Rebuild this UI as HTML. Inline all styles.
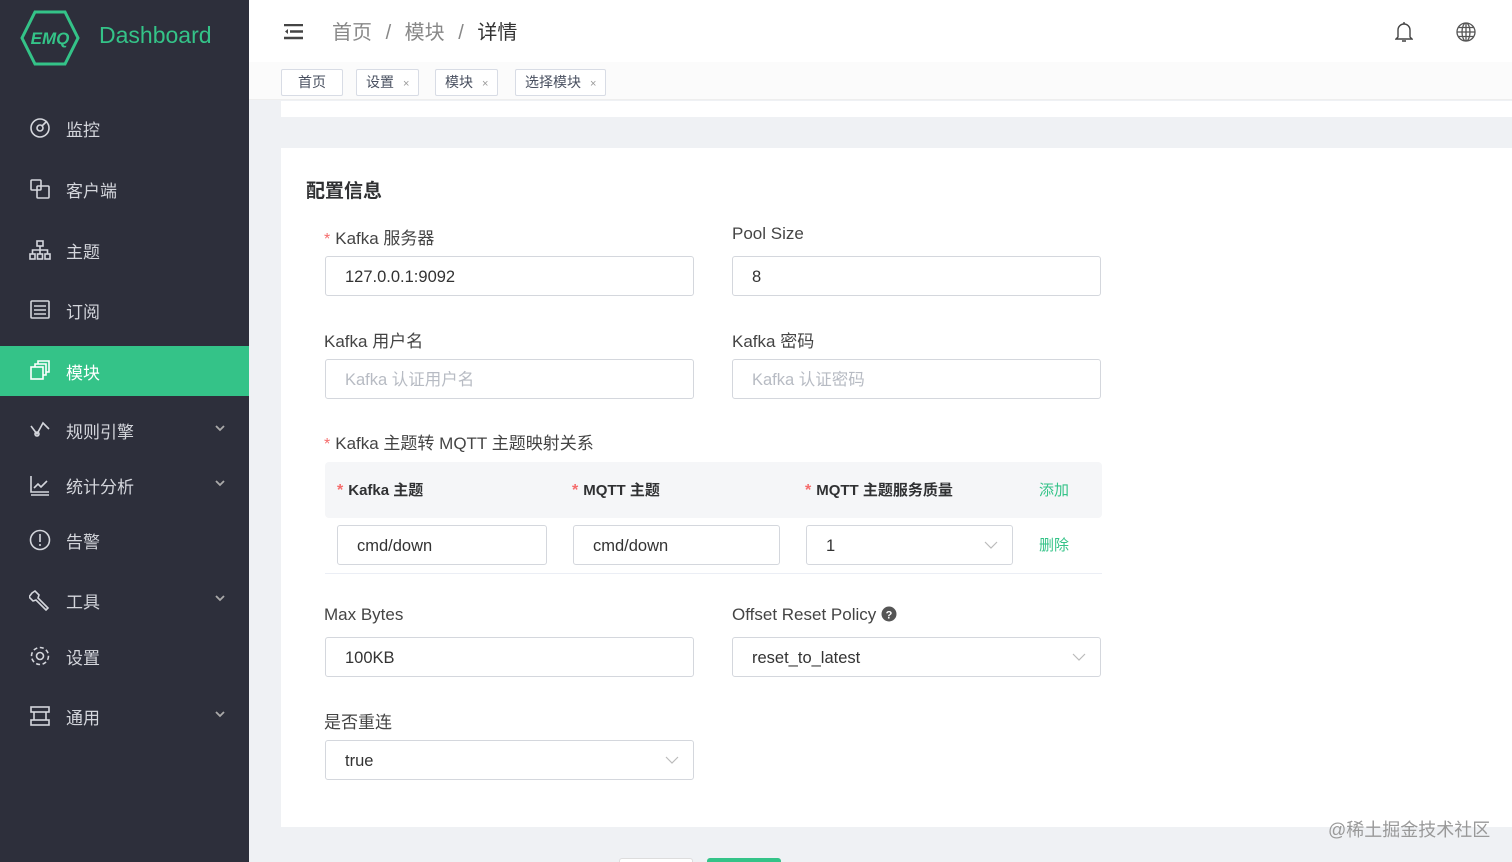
<!DOCTYPE html>
<html><head><meta charset="utf-8"><style>
*{box-sizing:border-box;margin:0;padding:0}
html,body{width:1512px;height:862px;overflow:hidden}
body{background:#eff1f4;font-family:"Liberation Sans","Noto Sans CJK SC",sans-serif;position:relative;color:#303133}
.side{position:absolute;left:0;top:0;width:249px;height:862px;background:#2d2f3b}
.logo{position:absolute;left:20px;top:10px}
.brand{position:absolute;left:99px;top:22px;font-size:23px;color:#34c388}
.mi{position:absolute;left:0;width:249px;height:50px;color:#d4d6dc;font-size:17px}
.mi .t{position:absolute;left:66px;top:13px}
.mi svg.ic{position:absolute;left:29px;top:14px}
.mi .ar{position:absolute;left:214px;top:18px}
.act{background:#34c388;color:#fff}
.hdr{position:absolute;left:249px;top:0;right:0;height:62px;background:#fff}
.tags{position:absolute;left:249px;top:62px;right:0;height:38px;background:#fbfbfb;border-bottom:1px solid #eee}
.tag{position:absolute;top:69px;height:27px;border:1px solid #d8dce5;background:#fff;font-size:14px;line-height:25px;padding:0 9px;color:#495060;border-radius:2px}
.tag i{font-style:normal;font-size:11px;color:#999;margin-left:9px}
.card{position:absolute;left:281px;top:148px;width:1231px;height:679px;background:#fff}
.lbl{position:absolute;font-size:17px;color:#444}
.req{color:#f56c6c;font-size:16px;margin-right:5px}
.inp{position:absolute;height:40px;border:1px solid #d4d7dd;border-radius:3px;font-size:16.5px;color:#333;padding-left:19px;line-height:40px;background:#fff}
.ph{color:#b7bbc3}
.chev{position:absolute;right:14px;top:14px}
.g{color:#34c388;font-size:15px;position:absolute}
</style></head><body>
<div class="side">
<svg class="logo" width="60" height="56" viewBox="0 0 60 56"><polygon points="15,2 45,2 58,28 45,54 15,54 2,28" fill="none" stroke="#34c388" stroke-width="3"/><text x="30" y="34" font-size="17" font-style="italic" font-weight="bold" fill="#34c388" text-anchor="middle" font-family="Liberation Sans">EMQ</text></svg>
<div class="brand">Dashboard</div>
<div class="mi" style="top:103px"><svg class="ic" width="22" height="22" viewBox="0 0 22 22" fill="none" stroke="#d4d6dc" stroke-width="1.6"><circle cx="11" cy="11" r="9"/><circle cx="11" cy="11" r="3"/><path d="M13 9l5-5"/></svg><span class="t">监控</span></div>
<div class="mi" style="top:164px"><svg class="ic" width="22" height="22" viewBox="0 0 22 22" fill="none" stroke="#d4d6dc" stroke-width="1.6"><rect x="2" y="2" width="10" height="10" rx="1"/><rect x="8" y="8" width="12" height="12" rx="1"/></svg><span class="t">客户端</span></div>
<div class="mi" style="top:225px"><svg class="ic" width="22" height="22" viewBox="0 0 22 22" fill="none" stroke="#d4d6dc" stroke-width="1.6"><rect x="8" y="2" width="6" height="5"/><rect x="1" y="15" width="5" height="5"/><rect x="8.5" y="15" width="5" height="5"/><rect x="16" y="15" width="5" height="5"/><path d="M11 7v8M3.5 15v-4h15v4"/></svg><span class="t">主题</span></div>
<div class="mi" style="top:285px"><svg class="ic" width="22" height="22" viewBox="0 0 22 22" fill="none" stroke="#d4d6dc" stroke-width="1.6"><rect x="2" y="2" width="18" height="17" rx="1"/><path d="M5 7h12M5 11h12M5 15h12"/></svg><span class="t">订阅</span></div>
<div class="mi act" style="top:346px"><svg class="ic" width="22" height="22" viewBox="0 0 22 22" fill="none" stroke="#fff" stroke-width="1.6"><rect x="2" y="7" width="12" height="12"/><path d="M6 7V4h11v11h-3M9 4V1h11v11h-3"/></svg><span class="t">模块</span></div>
<div class="mi" style="top:405px"><svg class="ic" width="22" height="22" viewBox="0 0 22 22" fill="none" stroke="#d4d6dc" stroke-width="1.6"><path d="M2 7l6 8 6-11 6 6"/><circle cx="8" cy="15" r="2"/></svg><span class="t">规则引擎</span><svg class="ar" width="12" height="10"><path d="M2 3l4 4 4-4" fill="none" stroke="#aaa" stroke-width="1.8"/></svg></div>
<div class="mi" style="top:460px"><svg class="ic" width="22" height="22" viewBox="0 0 22 22" fill="none" stroke="#d4d6dc" stroke-width="1.6"><path d="M2 2v16h18M2 21h18M5 14l4-4 3 3 6-6"/></svg><span class="t">统计分析</span><svg class="ar" width="12" height="10"><path d="M2 3l4 4 4-4" fill="none" stroke="#aaa" stroke-width="1.8"/></svg></div>
<div class="mi" style="top:515px"><svg class="ic" width="22" height="22" viewBox="0 0 22 22" fill="none" stroke="#d4d6dc" stroke-width="1.6"><circle cx="11" cy="11" r="9.5"/><path d="M11 5v8M11 15v2"/></svg><span class="t">告警</span></div>
<div class="mi" style="top:575px"><svg class="ic" width="22" height="22" viewBox="0 0 22 22" fill="none" stroke="#d4d6dc" stroke-width="1.6"><path d="M3 4l3-2 4 4-1 3 10 10-2 2-10-10-3 1-4-4z"/></svg><span class="t">工具</span><svg class="ar" width="12" height="10"><path d="M2 3l4 4 4-4" fill="none" stroke="#aaa" stroke-width="1.8"/></svg></div>
<div class="mi" style="top:631px"><svg class="ic" width="22" height="22" viewBox="0 0 22 22" fill="none" stroke="#d4d6dc" stroke-width="1.6"><circle cx="11" cy="11" r="3.5"/><circle cx="11" cy="11" r="8.5" stroke-dasharray="4 2.6"/></svg><span class="t">设置</span></div>
<div class="mi" style="top:691px"><svg class="ic" width="22" height="22" viewBox="0 0 22 22" fill="none" stroke="#d4d6dc" stroke-width="1.6"><rect x="2" y="2" width="18" height="5"/><rect x="2" y="15" width="18" height="5"/><path d="M5 7v8M17 7v8"/></svg><span class="t">通用</span><svg class="ar" width="12" height="10"><path d="M2 3l4 4 4-4" fill="none" stroke="#aaa" stroke-width="1.8"/></svg></div>
</div>
<div class="hdr">
<svg style="position:absolute;left:35px;top:24px" width="20" height="16"><path d="M0 1h19M6 7.5h13M0 14h19" stroke="#444" stroke-width="2.5"/><path d="M4 5l-3 2.5 3 2.5z" fill="#444"/></svg>
<div style="position:absolute;left:83px;top:16px;font-size:20px;color:#888">首页 <span style="margin:0 8px">/</span> 模块 <span style="margin:0 8px">/</span> <span style="color:#333">详情</span></div>
<svg style="position:absolute;left:1146px;top:21px" width="18" height="22" viewBox="0 0 18 22" fill="none" stroke="#444" stroke-width="1.4"><path d="M3 16V9a6 6 0 0112 0v7l2 2H1z"/><path d="M7 20h4M9 1v2"/></svg>
<svg style="position:absolute;left:1207px;top:22px" width="20" height="20" viewBox="0 0 20 20" fill="none" stroke="#555" stroke-width="1.3"><circle cx="10" cy="10" r="9"/><ellipse cx="10" cy="10" rx="4" ry="9"/><path d="M1 10h18M2.5 5.5h15M2.5 14.5h15M10 1v18"/></svg>
</div>
<div class="tags"></div>
<div class="tag" style="left:281px;width:62px;text-align:center">首页</div>
<div class="tag" style="left:356px">设置<i>×</i></div>
<div class="tag" style="left:435px">模块<i>×</i></div>
<div class="tag" style="left:515px">选择模块<i>×</i></div>
<div style="position:absolute;left:281px;top:101px;right:0;height:16px;background:#fff"></div>
<div class="card"></div>
<div style="position:absolute;left:306px;top:176px;font-size:19px;font-weight:bold">配置信息</div>
<div class="lbl" style="left:324px;top:224px"><span class="req">*</span>Kafka 服务器</div>
<div class="lbl" style="left:732px;top:224px">Pool Size</div>
<div class="inp" style="left:325px;top:256px;width:369px">127.0.0.1:9092</div>
<div class="inp" style="left:732px;top:256px;width:369px">8</div>
<div class="lbl" style="left:324px;top:327px">Kafka 用户名</div>
<div class="lbl" style="left:732px;top:327px">Kafka 密码</div>
<div class="inp ph" style="left:325px;top:359px;width:369px">Kafka 认证用户名</div>
<div class="inp ph" style="left:732px;top:359px;width:369px">Kafka 认证密码</div>
<div class="lbl" style="left:324px;top:429px"><span class="req">*</span>Kafka 主题转 MQTT 主题映射关系</div>
<div style="position:absolute;left:325px;top:462px;width:777px;height:56px;background:#f5f6f8;border-radius:4px"></div>
<div style="position:absolute;left:337px;top:479px;font-size:15px;font-weight:bold"><span class="req">*</span>Kafka 主题</div>
<div style="position:absolute;left:572px;top:479px;font-size:15px;font-weight:bold"><span class="req">*</span>MQTT 主题</div>
<div style="position:absolute;left:805px;top:479px;font-size:15px;font-weight:bold"><span class="req">*</span>MQTT 主题服务质量</div>
<div class="g" style="left:1039px;top:479px">添加</div>
<div class="inp" style="left:337px;top:525px;width:210px">cmd/down</div>
<div class="inp" style="left:573px;top:525px;width:207px">cmd/down</div>
<div class="inp" style="left:806px;top:525px;width:207px">1<svg class="chev" width="14" height="10"><path d="M1 2l6 6 6-6" fill="none" stroke="#bbb" stroke-width="1.2"/></svg></div>
<div class="g" style="left:1039px;top:534px">删除</div>
<div style="position:absolute;left:325px;top:573px;width:777px;height:1px;background:#ebeef5"></div>
<div class="lbl" style="left:324px;top:605px">Max Bytes</div>
<div class="lbl" style="left:732px;top:605px">Offset Reset Policy <svg width="16" height="16" style="vertical-align:-2px"><circle cx="8" cy="8" r="7.5" fill="#555"/><text x="8" y="12.5" font-size="11" font-weight="bold" fill="#fff" text-anchor="middle">?</text></svg></div>
<div class="inp" style="left:325px;top:637px;width:369px">100KB</div>
<div class="inp" style="left:732px;top:637px;width:369px">reset_to_latest<svg class="chev" width="14" height="10"><path d="M1 2l6 6 6-6" fill="none" stroke="#bbb" stroke-width="1.2"/></svg></div>
<div class="lbl" style="left:324px;top:708px">是否重连</div>
<div class="inp" style="left:325px;top:740px;width:369px">true<svg class="chev" width="14" height="10"><path d="M1 2l6 6 6-6" fill="none" stroke="#bbb" stroke-width="1.2"/></svg></div>
<div style="position:absolute;left:1328px;top:816px;font-size:18px;color:#999">@稀土掘金技术社区</div>
<div style="position:absolute;left:619px;top:858px;width:74px;height:10px;border:1px solid #ddd;background:#fff;border-radius:3px"></div>
<div style="position:absolute;left:707px;top:858px;width:74px;height:10px;background:#34c388;border-radius:3px"></div>
</body></html>
